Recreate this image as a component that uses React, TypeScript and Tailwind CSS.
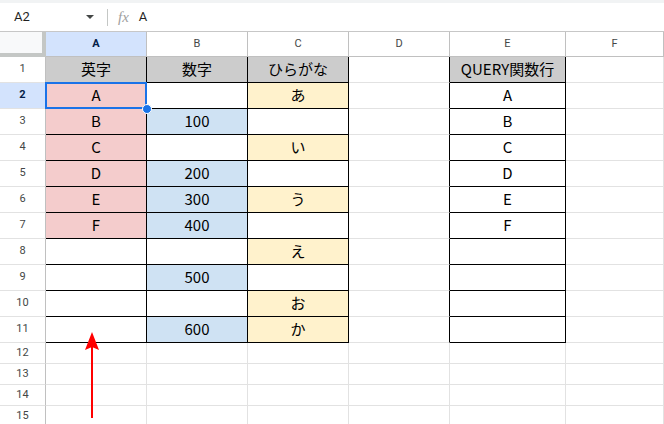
import React from "react"

const GRID = "#e2e2e2"
const BLACK = "#000000"

type Row = {
    a: string
    b: string
    c: string
    e: string
    aFill?: boolean
}

const rows: Row[] = [
    { a: "A", b: "", c: "あ", e: "A", aFill: true },
    { a: "B", b: "100", c: "", e: "B", aFill: true },
    { a: "C", b: "", c: "い", e: "C", aFill: true },
    { a: "D", b: "200", c: "", e: "D", aFill: true },
    { a: "E", b: "300", c: "う", e: "E", aFill: true },
    { a: "F", b: "400", c: "", e: "F", aFill: true },
    { a: "", b: "", c: "え", e: "" },
    { a: "", b: "500", c: "", e: "" },
    { a: "", b: "", c: "お", e: "" },
    { a: "", b: "600", c: "か", e: "" },
]

type CellProps = {
    text?: string
    bg?: string
    right: string
    bottom: string
    selected?: boolean
}

const Cell = ({ text = "", bg = "#ffffff", right, bottom, selected }: CellProps) => {
    return (
        <div
            className={
                "relative flex items-center justify-center border-r border-b text-[15px] text-[#000] font-['Noto_Sans_CJK_JP',sans-serif] " +
                (selected ? "z-10" : "")
            }
            style={{ backgroundColor: bg, borderRightColor: right, borderBottomColor: bottom }}
        >
            {text}
            {selected && (
                <>
                    <div className="absolute -left-px -top-px -right-px -bottom-px border-2 border-[#1a73e8]" />
                    <div className="absolute -right-[6px] -bottom-[6px] w-[10px] h-[10px] rounded-full bg-[#1a73e8] border border-white" />
                </>
            )}
        </div>
    )
}

const RowHead = ({ n, active }: { n: number; active?: boolean }) => (
    <div
        className={
            "flex items-center justify-center border-r border-r-[#c0c0c0] border-b border-b-[#e2e2e2] text-[11px] font-['Roboto',sans-serif] " +
            (active ? "bg-[#d3e3fd] text-[#041e49] font-bold" : "bg-white text-[#444746]")
        }
    >
        {n}
    </div>
)

const ColHead = ({ label, active }: { label: string; active?: boolean }) => (
    <div
        className={
            "flex items-center justify-center border-r border-r-[#c0c0c0] border-b border-b-[#c0c0c0] text-[11px] font-['Roboto',sans-serif] " +
            (active ? "bg-[#d3e3fd] text-[#041e49] font-bold" : "bg-white text-[#444746]")
        }
    >
        {label}
    </div>
)

export default function App() {
    return (
        <div className="relative w-[664px] h-[424px] overflow-hidden bg-white">
            {/* formula bar */}
            <div className="h-[3px] bg-[#f1f3f4]" />
            <div className="h-[29px] flex items-center border-b border-[#c7c7c7] font-['Roboto',sans-serif] text-[13px] text-[#1f1f1f]">
                <span className="ml-[14px] w-[68px]">A2</span>
                <svg width="8" height="4" viewBox="0 0 8 4" className="ml-[4px]">
                    <path d="M0 0 L8 0 L4 4 Z" fill="#444746" />
                </svg>
                <div className="ml-[13px] w-px h-[17px] bg-[#c4c7c5]" />
                <span className="ml-[10px] italic text-[15px] text-[#a0a0a0] font-['Liberation_Serif',serif]">fx</span>
                <span className="ml-[10px]">A</span>
            </div>

            {/* sheet grid */}
            <div className="grid grid-cols-[46px_101px_101px_101px_101px_116px_1fr] grid-rows-[25px_repeat(11,26px)_repeat(4,21px)]">
                <div className="bg-[#f8f9fa] border-r-4 border-b-4 border-[#c4c7c5]" />
                <ColHead label="A" active />
                <ColHead label="B" />
                <ColHead label="C" />
                <ColHead label="D" />
                <ColHead label="E" />
                <ColHead label="F" />

                <RowHead n={1} />
                <Cell text="英字" bg="#cccccc" right={BLACK} bottom={BLACK} />
                <Cell text="数字" bg="#cccccc" right={BLACK} bottom={BLACK} />
                <Cell text="ひらがな" bg="#cccccc" right={BLACK} bottom={BLACK} />
                <Cell right={BLACK} bottom={GRID} />
                <Cell text="QUERY関数行" bg="#cccccc" right={BLACK} bottom={BLACK} />
                <Cell right={GRID} bottom={GRID} />

                {rows.map((r, i) => (
                    <React.Fragment key={i}>
                        <RowHead n={i + 2} active={i === 0} />
                        <Cell text={r.a} bg={r.aFill ? "#f4cccc" : "#ffffff"} right={BLACK} bottom={BLACK} selected={i === 0} />
                        <Cell text={r.b} bg={r.b ? "#cfe2f3" : "#ffffff"} right={BLACK} bottom={BLACK} />
                        <Cell text={r.c} bg={r.c ? "#fff2cc" : "#ffffff"} right={BLACK} bottom={BLACK} />
                        <Cell right={BLACK} bottom={GRID} />
                        <Cell text={r.e} right={BLACK} bottom={BLACK} />
                        <Cell right={GRID} bottom={GRID} />
                    </React.Fragment>
                ))}

                {[12, 13, 14, 15].map((n) => (
                    <React.Fragment key={n}>
                        <RowHead n={n} />
                        <Cell right={GRID} bottom={GRID} />
                        <Cell right={GRID} bottom={GRID} />
                        <Cell right={GRID} bottom={GRID} />
                        <Cell right={GRID} bottom={GRID} />
                        <Cell right={GRID} bottom={GRID} />
                        <Cell right={GRID} bottom={GRID} />
                    </React.Fragment>
                ))}
            </div>

            {/* red arrow */}
            <svg className="absolute left-[80px] top-[328px]" width="24" height="92" viewBox="0 0 24 92">
                <line x1="12" y1="18" x2="12" y2="90" stroke="#ff0000" strokeWidth="2" />
                <path d="M12 4 L19 22 L12 19 L5 22 Z" fill="#ff0000" />
            </svg>
        </div>
    )
}
